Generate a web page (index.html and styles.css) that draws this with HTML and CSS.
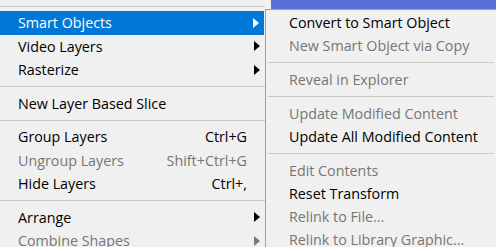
FILE: index.html
```html
<!DOCTYPE html>
<html>
<head>
<meta charset="utf-8">
<link rel="stylesheet" href="styles.css">
</head>
<body>
<div class="screen">
  <div class="menu">
    <div class="sep"></div>
    <div class="item active"><span class="label">Smart Objects</span><span class="tail"><i class="arrow"></i></span></div>
    <div class="item"><span class="label">Video Layers</span><span class="tail"><i class="arrow"></i></span></div>
    <div class="item"><span class="label">Rasterize</span><span class="tail"><i class="arrow"></i></span></div>
    <div class="sep"></div>
    <div class="item"><span class="label">New Layer Based Slice</span><span class="tail"></span></div>
    <div class="sep"></div>
    <div class="item"><span class="label">Group Layers</span><span class="key">Ctrl+G</span><span class="tail"></span></div>
    <div class="item disabled"><span class="label">Ungroup Layers</span><span class="key">Shift+Ctrl+G</span><span class="tail"></span></div>
    <div class="item"><span class="label">Hide Layers</span><span class="key">Ctrl+,</span><span class="tail"></span></div>
    <div class="sep"></div>
    <div class="item"><span class="label">Arrange</span><span class="tail"><i class="arrow"></i></span></div>
    <div class="item disabled"><span class="label">Combine Shapes</span><span class="tail"><i class="arrow"></i></span></div>
  </div>
  <div class="side">
    <div class="band"></div>
    <div class="submenu">
      <div class="sub-item">Convert to Smart Object</div>
      <div class="sub-item disabled">New Smart Object via Copy</div>
      <div class="sub-sep"></div>
      <div class="sub-item disabled">Reveal in Explorer</div>
      <div class="sub-sep"></div>
      <div class="sub-item disabled">Update Modified Content</div>
      <div class="sub-item">Update All Modified Content</div>
      <div class="sub-sep"></div>
      <div class="sub-item disabled">Edit Contents</div>
      <div class="sub-item">Reset Transform</div>
      <div class="sub-item disabled">Relink to File...</div>
      <div class="sub-item disabled">Relink to Library Graphic...</div>
    </div>
  </div>
</div>
</body>
</html>
```

FILE: styles.css
```css
html, body {
  margin: 0;
  padding: 0;
}
body {
  background: #f0f0f0;
  font-family: "Open Sans", "Noto Sans", sans-serif;
  font-size: 14.3px;
  color: #000;
}
.screen {
  width: 496px;
  height: 247px;
  overflow: hidden;
  display: flex;
}
.menu {
  width: 265px;
  flex: none;
  padding-top: 2px;
}
.sep {
  height: 10px;
  display: flex;
  align-items: center;
}
.sep::before {
  content: "";
  flex: 1;
  height: 1px;
  background: #c9c9c9;
}
.menu > .sep:first-child {
  height: 9px;
}
.item {
  height: 23.5px;
  display: flex;
  align-items: center;
  padding-left: 18px;
  white-space: nowrap;
}
.item .label {
  flex: 1;
}
.item .tail {
  width: 18px;
  flex: none;
  display: flex;
  align-items: center;
}
.arrow {
  display: block;
  margin-left: 7px;
  width: 0;
  height: 0;
  border-left: 6px solid #000;
  border-top: 5px solid transparent;
  border-bottom: 5px solid transparent;
}
.item.active {
  background: #0078d7;
  color: #fff;
  margin-right: 1px;
}
.item.active .arrow {
  border-left-color: #fff;
}
.disabled {
  color: #767676;
}
.item.disabled .arrow {
  border-left-color: #7a7a7a;
}
.side {
  flex: 1;
  display: flex;
  flex-direction: column;
}
.band {
  height: 9px;
  margin-left: 6px;
  background: #5a70d8;
  flex: none;
}
.submenu {
  flex: 1;
  border-top: 1px solid #a0a0a0;
  border-left: 1px solid #a0a0a0;
  padding-top: 1px;
}
.sub-item {
  height: 23px;
  display: flex;
  align-items: center;
  padding-left: 23px;
  white-space: nowrap;
}
.sub-sep {
  height: 11px;
  display: flex;
  align-items: center;
  padding: 0 2px;
}
.sub-sep::before {
  content: "";
  flex: 1;
  height: 1px;
  background: #c9c9c9;
}
```
